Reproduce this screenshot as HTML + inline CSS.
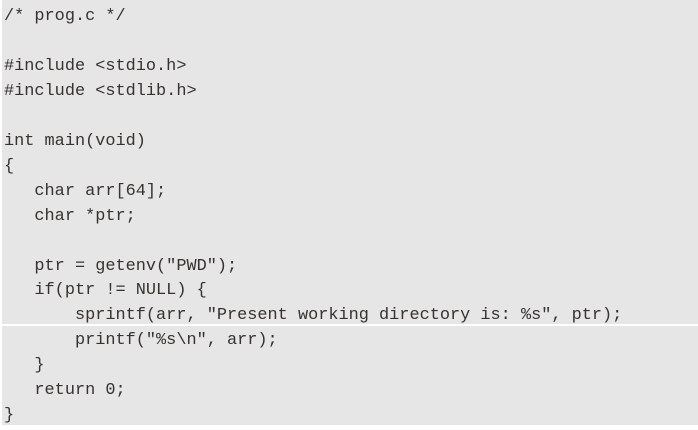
<!DOCTYPE html>
<html><head><meta charset="utf-8"><style>
html,body{margin:0;padding:0;background:#fff;width:698px;height:430px;overflow:hidden}
.box{position:absolute;left:2px;top:0;width:696px;height:425px;background:#e6e6e6}
.sep{position:absolute;left:0;top:324px;width:698px;height:2px;background:#fff}
pre{position:absolute;left:4px;top:5px;margin:0;font-family:"Liberation Mono",monospace;font-size:16.9px;line-height:24.95px;color:#36332f}
</style></head><body>
<div class="box"></div>
<pre>/* prog.c */

#include &lt;stdio.h&gt;
#include &lt;stdlib.h&gt;

int main(void)
{
   char arr[64];
   char *ptr;

   ptr = getenv("PWD");
   if(ptr != NULL) {
       sprintf(arr, "Present working directory is: %s", ptr);
       printf("%s\n", arr);
   }
   return 0;
}</pre>
<div class="sep"></div>
</body></html>
